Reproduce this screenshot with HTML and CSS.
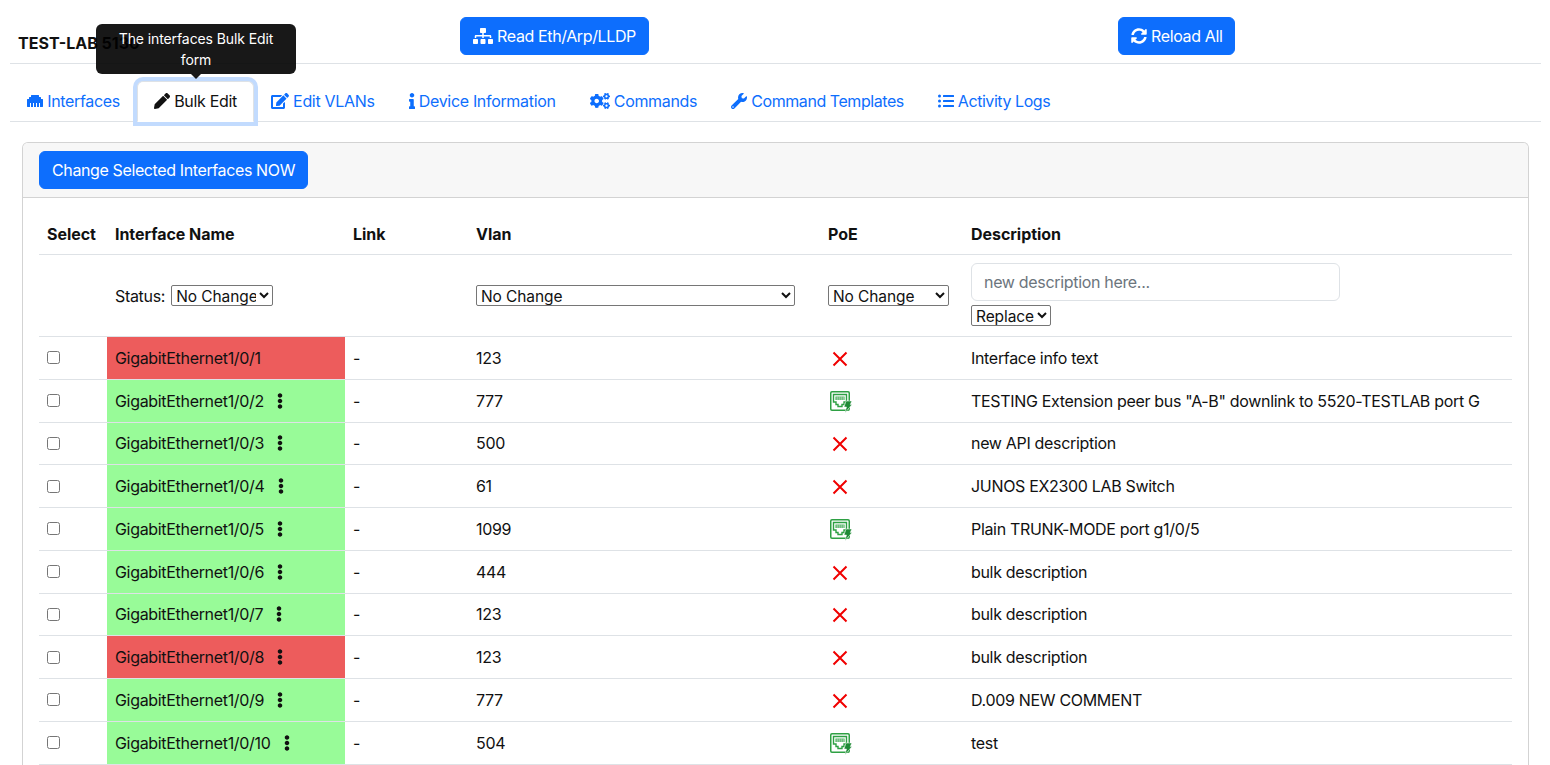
FILE: index.html
```html
<!DOCTYPE html>
<html>
<head>
    <title>TEST-LAB 5130: Bulk Edit</title>
    <meta charset="utf-8" />
    <link rel="stylesheet" href="styles.css">
</head>
<body>
<svg class="defs" aria-hidden="true">
    <symbol id="i-pencil" viewBox="0 0 512 512"><path d="M497.9 142.1l-46.1 46.1c-4.7 4.7-12.3 4.7-17 0l-111-111c-4.7-4.7-4.7-12.3 0-17l46.1-46.1c18.7-18.7 49.1-18.7 67.9 0l60.1 60.1c18.8 18.7 18.8 49.1 0 67.9zM284.2 99.8L21.6 362.4.4 483.9c-2.9 16.4 11.4 30.6 27.8 27.8l121.5-21.3 262.6-262.6c4.7-4.7 4.7-12.3 0-17l-111-111c-4.8-4.7-12.4-4.7-17.1 0z"/></symbol>
    <symbol id="i-sitemap" viewBox="0 0 640 512"><path d="M128 352H32c-17.67 0-32 14.33-32 32v96c0 17.67 14.33 32 32 32h96c17.67 0 32-14.33 32-32v-96c0-17.67-14.33-32-32-32zm-24-80h192v48h48v-48h192v48h48v-57.59c0-21.17-17.23-38.41-38.41-38.41H344v-64h40c17.67 0 32-14.33 32-32V32c0-17.67-14.33-32-32-32H256c-17.67 0-32 14.33-32 32v96c0 17.67 14.33 32 32 32h40v64H94.41C73.23 224 56 241.23 56 262.41V320h48v-48zm264 80h-96c-17.67 0-32 14.33-32 32v96c0 17.67 14.33 32 32 32h96c17.67 0 32-14.33 32-32v-96c0-17.67-14.33-32-32-32zm240 0h-96c-17.67 0-32 14.33-32 32v96c0 17.67 14.33 32 32 32h96c17.67 0 32-14.33 32-32v-96c0-17.67-14.33-32-32-32z"/></symbol>
    <symbol id="i-sync" viewBox="0 0 512 512"><path d="M370.72 133.28C339.458 104.008 298.888 87.962 255.848 88c-77.458.068-144.328 53.178-162.791 126.85-1.344 5.363-6.122 9.15-11.651 9.15H24.103c-7.498 0-13.194-6.807-11.807-14.176C33.933 94.924 134.813 8 256 8c66.448 0 126.791 26.136 171.315 68.685L463.03 40.97C478.149 25.851 504 36.559 504 57.941V192c0 13.255-10.745 24-24 24H345.941c-21.382 0-32.09-25.851-16.971-40.971l41.75-41.749zM32 296h134.059c21.382 0 32.09 25.851 16.971 40.971l-41.75 41.75c31.262 29.273 71.835 45.319 114.876 45.28 77.418-.07 144.315-53.144 162.787-126.849 1.344-5.363 6.122-9.15 11.651-9.15h57.304c7.498 0 13.194 6.807 11.807 14.176C478.067 417.076 377.187 504 256 504c-66.448 0-126.791-26.136-171.315-68.685L48.97 471.03C33.851 486.149 8 475.441 8 454.059V320c0-13.255 10.745-24 24-24z"/></symbol>
    <symbol id="i-edit" viewBox="0 0 576 512"><path d="M402.6 83.2l90.2 90.2c3.8 3.8 3.8 10 0 13.8L274.4 405.6l-92.8 10.3c-12.4 1.4-22.9-9.1-21.5-21.5l10.3-92.8L388.8 83.2c3.8-3.8 10-3.8 13.8 0zm162-22.9l-48.8-48.8c-15.2-15.2-39.9-15.2-55.2 0l-35.4 35.4c-3.8 3.8-3.8 10 0 13.8l90.2 90.2c3.8 3.8 10 3.8 13.8 0l35.4-35.4c15.2-15.3 15.2-40 0-55.2zM384 346.2V448H64V128h229.8c3.2 0 6.2-1.3 8.5-3.5l40-40c7.6-7.6 2.2-20.5-8.5-20.5H48C21.5 64 0 85.5 0 112v352c0 26.5 21.5 48 48 48h352c26.5 0 48-21.5 48-48V306.2c0-10.7-12.9-16-20.5-8.5l-40 40c-2.2 2.3-3.5 5.3-3.5 8.5z"/></symbol>
    <symbol id="i-info" viewBox="0 0 192 512"><path d="M20 424.229h20V279.771H20c-11.046 0-20-8.954-20-20V212c0-11.046 8.954-20 20-20h112c11.046 0 20 8.954 20 20v212.229h20c11.046 0 20 8.954 20 20V492c0 11.046-8.954 20-20 20H20c-11.046 0-20-8.954-20-20v-47.771c0-11.046 8.954-20 20-20zM96 0C56.235 0 24 32.235 24 72s32.235 72 72 72 72-32.235 72-72S135.764 0 96 0z"/></symbol>
    <symbol id="i-cogs" viewBox="0 0 640 512"><path d="M512.1 191l-8.2 14.3c-3 5.3-9.4 7.5-15.1 5.4-11.8-4.4-22.6-10.7-32.1-18.6-4.6-3.8-5.8-10.5-2.8-15.7l8.2-14.3c-6.9-8-12.3-17.3-15.9-27.4h-16.5c-6 0-11.2-4.3-12.2-10.3-2-12-2.1-24.6 0-37.1 1-6 6.2-10.4 12.2-10.4h16.5c3.6-10.1 9-19.4 15.9-27.4l-8.2-14.3c-3-5.2-1.9-11.9 2.8-15.7 9.5-7.9 20.4-14.2 32.1-18.6 5.7-2.1 12.1.1 15.1 5.4l8.2 14.3c10.5-1.9 21.2-1.9 31.7 0L552 6.3c3-5.3 9.4-7.5 15.1-5.4 11.8 4.4 22.6 10.7 32.1 18.6 4.6 3.8 5.8 10.5 2.8 15.7l-8.2 14.3c6.9 8 12.3 17.3 15.9 27.4h16.5c6 0 11.2 4.3 12.2 10.3 2 12 2.1 24.6 0 37.1-1 6-6.2 10.4-12.2 10.4h-16.5c-3.6 10.1-9 19.4-15.9 27.4l8.2 14.3c3 5.2 1.9 11.9-2.8 15.7-9.5 7.9-20.4 14.2-32.1 18.6-5.7 2.1-12.1-.1-15.1-5.4l-8.2-14.3c-10.4 1.9-21.2 1.9-31.7 0zm-10.5-58.8c38.5 29.6 82.4-14.3 52.8-52.8-38.5-29.7-82.4 14.3-52.8 52.8zM386.3 286.1l33.7 16.8c10.1 5.8 14.5 18.1 10.5 29.1-8.9 24.2-26.4 46.4-42.6 65.8-7.4 8.9-20.2 11.1-30.3 5.3l-29.1-16.8c-16 13.7-34.6 24.6-54.9 31.7v33.6c0 11.6-8.3 21.6-19.7 23.6-24.6 4.2-50.4 4.4-75.9 0-11.5-2-20-11.9-20-23.6V418c-20.3-7.2-38.9-18-54.9-31.7L74 403c-10 5.8-22.9 3.6-30.3-5.3-16.2-19.4-33.3-41.6-42.2-65.7-4-10.9.4-23.2 10.5-29.1l33.3-16.8c-3.9-20.9-3.9-42.4 0-63.4L12 205.8c-10.1-5.8-14.6-18.1-10.5-29 8.9-24.2 26-46.4 42.2-65.8 7.4-8.9 20.2-11.1 30.3-5.3l29.1 16.8c16-13.7 34.6-24.6 54.9-31.7V57.1c0-11.5 8.2-21.5 19.6-23.5 24.6-4.2 50.5-4.4 76-.1 11.5 2 20 11.9 20 23.6v33.6c20.3 7.2 38.9 18 54.9 31.7l29.1-16.8c10-5.8 22.9-3.6 30.3 5.3 16.2 19.4 33.2 41.6 42.1 65.8 4 10.9.1 23.2-10 29.1l-33.7 16.8c3.9 21 3.9 42.5 0 63.5zm-117.6 21.1c59.2-77-28.7-164.9-105.7-105.7-59.2 77 28.7 164.9 105.7 105.7zm243.4 182.7l-8.2 14.3c-3 5.3-9.4 7.5-15.1 5.4-11.8-4.4-22.6-10.7-32.1-18.6-4.6-3.8-5.8-10.5-2.8-15.7l8.2-14.3c-6.9-8-12.3-17.3-15.9-27.4h-16.5c-6 0-11.2-4.3-12.2-10.3-2-12-2.1-24.6 0-37.1 1-6 6.2-10.4 12.2-10.4h16.5c3.6-10.1 9-19.4 15.9-27.4l-8.2-14.3c-3-5.2-1.9-11.9 2.8-15.7 9.5-7.9 20.4-14.2 32.1-18.6 5.7-2.1 12.1.1 15.1 5.4l8.2 14.3c10.5-1.9 21.2-1.9 31.7 0l8.2-14.3c3-5.3 9.4-7.5 15.1-5.4 11.8 4.4 22.6 10.7 32.1 18.6 4.6 3.8 5.8 10.5 2.8 15.7l-8.2 14.3c6.9 8 12.3 17.3 15.9 27.4h16.5c6 0 11.2 4.3 12.2 10.3 2 12 2.1 24.6 0 37.1-1 6-6.2 10.4-12.2 10.4h-16.5c-3.6 10.1-9 19.4-15.9 27.4l8.2 14.3c3 5.2 1.9 11.9-2.8 15.7-9.5 7.9-20.4 14.2-32.1 18.6-5.7 2.1-12.1-.1-15.1-5.4l-8.2-14.3c-10.4 1.9-21.2 1.9-31.7 0zM501.6 431c38.5 29.6 82.4-14.3 52.8-52.8-38.5-29.6-82.4 14.3-52.8 52.8z"/></symbol>
    <symbol id="i-wrench" viewBox="0 0 512 512"><path d="M507.73 109.1c-2.24-9.03-13.54-12.09-20.12-5.51l-74.36 74.36-67.88-11.31-11.31-67.88 74.36-74.36c6.62-6.62 3.43-17.9-5.66-20.16-47.38-11.74-99.55.91-136.58 37.93-39.64 39.64-50.55 97.1-34.05 147.2L18.74 402.76c-24.99 24.99-24.99 65.51 0 90.5 24.99 24.99 65.51 24.99 90.5 0l213.21-213.21c50.12 16.71 107.47 5.68 147.37-34.22 37.07-37.07 49.7-89.32 37.91-136.73zM64 472c-13.25 0-24-10.75-24-24 0-13.26 10.75-24 24-24s24 10.74 24 24c0 13.25-10.75 24-24 24z"/></symbol>
    <symbol id="i-list" viewBox="0 0 512 512"><path d="M48 48a48 48 0 1 0 48 48 48 48 0 0 0-48-48zm0 160a48 48 0 1 0 48 48 48 48 0 0 0-48-48zm0 160a48 48 0 1 0 48 48 48 48 0 0 0-48-48zm448 16H176a16 16 0 0 0-16 16v32a16 16 0 0 0 16 16h320a16 16 0 0 0 16-16v-32a16 16 0 0 0-16-16zm0-320H176a16 16 0 0 0-16 16v32a16 16 0 0 0 16 16h320a16 16 0 0 0 16-16V80a16 16 0 0 0-16-16zm0 160H176a16 16 0 0 0-16 16v32a16 16 0 0 0 16 16h320a16 16 0 0 0 16-16v-32a16 16 0 0 0-16-16z"/></symbol>
    <symbol id="i-ethernet" viewBox="0 0 512 512"><path d="M496 192h-48v-48c0-8.8-7.2-16-16-16h-48V80c0-8.8-7.2-16-16-16H144c-8.8 0-16 7.2-16 16v48H80c-8.8 0-16 7.2-16 16v48H16c-8.8 0-16 7.2-16 16v224c0 8.8 7.2 16 16 16h80V320h32v128h64V320h32v128h64V320h32v128h64V320h32v128h80c8.800 0 16-7.200 16-16V208c0-8.800-7.200-16-16-16z"/></symbol>
    <symbol id="i-dots" viewBox="0 0 192 512"><path d="M96 184c39.8 0 72 32.2 72 72s-32.2 72-72 72-72-32.2-72-72 32.2-72 72-72zM24 80c0 39.8 32.2 72 72 72s72-32.2 72-72S135.8 8 96 8 24 40.2 24 80zm0 352c0 39.8 32.2 72 72 72s72-32.2 72-72-32.2-72-72-72-72 32.2-72 72z"/></symbol>
    <symbol id="i-no" viewBox="0 0 16 16"><path d="M1.500 1.500l13 13M14.500 1.500l-13 13" fill="none" stroke="#f00000" stroke-width="2"/></symbol>
    <symbol id="i-poe" viewBox="0 0 22 22">
        <rect x=".75" y=".75" width="18.500" height="18.500" rx="1.200" fill="none" stroke="#2ea043" stroke-width="1.500"/>
        <path d="M3.500 3.500h13v7.500h-2.500v2.500h-2v2h-4v-2h-2v-2.500h-2.500z" fill="none" stroke="#2ea043" stroke-width="1.400"/>
        <path d="M5.500 5.500h9v3.500h-9z" fill="#2ea043"/>
        <path d="M7.100 5.500v3.500M9.100 5.500v3.500M11.100 5.500v3.500M13.100 5.500v3.500" stroke="#fff" stroke-width=".8"/>
        <path d="M16 10h5.800l-1.500 3.500h1.700l-7 8.300 1.500-5.800h-2.500z" fill="#1f8a36" stroke="#fff" stroke-width=".5"/>
    </symbol>
</svg>

<div class="page">
    <div class="topbar">
        <h6 class="devname">TEST-LAB 5130</h6>
        <div><button class="btn"><svg class="ico wide"><use href="#i-sitemap"/></svg> Read Eth/Arp/LLDP</button></div>
        <div><button class="btn"><svg class="ico"><use href="#i-sync"/></svg> Reload All</button></div>
    </div>

    <ul class="tabs">
        <li><a href="#"><svg class="ico"><use href="#i-ethernet"/></svg> Interfaces</a></li>
        <li class="tip-holder">
            <a href="#" class="active"><svg class="ico"><use href="#i-pencil"/></svg> Bulk Edit</a>
            <div class="tooltip">The interfaces Bulk Edit form</div>
        </li>
        <li><a href="#"><svg class="ico wider"><use href="#i-edit"/></svg> Edit VLANs</a></li>
        <li><a href="#"><svg class="ico thin"><use href="#i-info"/></svg> Device Information</a></li>
        <li><a href="#"><svg class="ico wide"><use href="#i-cogs"/></svg> Commands</a></li>
        <li class="tight"><a href="#"><svg class="ico"><use href="#i-wrench"/></svg> Command Templates</a></li>
        <li class="tight"><a href="#"><svg class="ico"><use href="#i-list"/></svg> Activity Logs</a></li>
    </ul>

    <div class="card">
        <div class="card-head"><button class="btn">Change Selected Interfaces NOW</button></div>
        <div class="card-body">
            <table class="grid">
                <colgroup>
                    <col class="c-sel"><col class="c-name"><col class="c-link"><col class="c-vlan"><col class="c-poe"><col>
                </colgroup>
                <thead>
                    <tr><th>Select</th><th>Interface Name</th><th>Link</th><th>Vlan</th><th>PoE</th><th>Description</th></tr>
                </thead>
                <tbody>
                    <tr class="filters">
                        <td></td>
                        <td>Status: <select class="s-status"><option>No Change</option></select></td>
                        <td></td>
                        <td><select class="s-vlan"><option>No Change</option></select></td>
                        <td><select class="s-poe"><option>No Change</option></select></td>
                        <td>
                            <input class="desc" type="text" placeholder="new description here...">
                            <select class="s-mode"><option>Replace</option></select>
                        </td>
                    </tr>
                    <tr>
                        <td><input type="checkbox"></td>
                        <td class="down">GigabitEthernet1/0/1</td>
                        <td>-</td><td>123</td>
                        <td><svg class="no"><use href="#i-no"/></svg></td>
                        <td>Interface info text</td>
                    </tr>
                    <tr>
                        <td><input type="checkbox"></td>
                        <td class="up">GigabitEthernet1/0/2 <svg class="dots"><use href="#i-dots"/></svg></td>
                        <td>-</td><td>777</td>
                        <td><svg class="poe"><use href="#i-poe"/></svg></td>
                        <td>TESTING Extension peer bus "A-B" downlink to 5520-TESTLAB port G</td>
                    </tr>
                    <tr>
                        <td><input type="checkbox"></td>
                        <td class="up">GigabitEthernet1/0/3 <svg class="dots"><use href="#i-dots"/></svg></td>
                        <td>-</td><td>500</td>
                        <td><svg class="no"><use href="#i-no"/></svg></td>
                        <td>new API description</td>
                    </tr>
                    <tr>
                        <td><input type="checkbox"></td>
                        <td class="up">GigabitEthernet1/0/4 <svg class="dots"><use href="#i-dots"/></svg></td>
                        <td>-</td><td>61</td>
                        <td><svg class="no"><use href="#i-no"/></svg></td>
                        <td>JUNOS EX2300 LAB Switch</td>
                    </tr>
                    <tr>
                        <td><input type="checkbox"></td>
                        <td class="up">GigabitEthernet1/0/5 <svg class="dots"><use href="#i-dots"/></svg></td>
                        <td>-</td><td>1099</td>
                        <td><svg class="poe"><use href="#i-poe"/></svg></td>
                        <td>Plain TRUNK-MODE port g1/0/5</td>
                    </tr>
                    <tr>
                        <td><input type="checkbox"></td>
                        <td class="up">GigabitEthernet1/0/6 <svg class="dots"><use href="#i-dots"/></svg></td>
                        <td>-</td><td>444</td>
                        <td><svg class="no"><use href="#i-no"/></svg></td>
                        <td>bulk description</td>
                    </tr>
                    <tr>
                        <td><input type="checkbox"></td>
                        <td class="up">GigabitEthernet1/0/7 <svg class="dots"><use href="#i-dots"/></svg></td>
                        <td>-</td><td>123</td>
                        <td><svg class="no"><use href="#i-no"/></svg></td>
                        <td>bulk description</td>
                    </tr>
                    <tr>
                        <td><input type="checkbox"></td>
                        <td class="down">GigabitEthernet1/0/8 <svg class="dots"><use href="#i-dots"/></svg></td>
                        <td>-</td><td>123</td>
                        <td><svg class="no"><use href="#i-no"/></svg></td>
                        <td>bulk description</td>
                    </tr>
                    <tr>
                        <td><input type="checkbox"></td>
                        <td class="up">GigabitEthernet1/0/9 <svg class="dots"><use href="#i-dots"/></svg></td>
                        <td>-</td><td>777</td>
                        <td><svg class="no"><use href="#i-no"/></svg></td>
                        <td>D.009 NEW COMMENT</td>
                    </tr>
                    <tr>
                        <td><input type="checkbox"></td>
                        <td class="up">GigabitEthernet1/0/10 <svg class="dots"><use href="#i-dots"/></svg></td>
                        <td>-</td><td>504</td>
                        <td><svg class="poe"><use href="#i-poe"/></svg></td>
                        <td>test</td>
                    </tr>
                </tbody>
            </table>
        </div>
    </div>
</div>
</body>
</html>
```

FILE: styles.css
```css
html, body {margin: 0; background: #fff;}
body {font: 16px/24px Inter, "Liberation Sans", sans-serif; color: #111; letter-spacing: -.32px;}
.defs {display: none;}
.page {height: 100vh; overflow: hidden; padding: 0 9px 0 10px; box-sizing: border-box;}

.ico {width: 16px; height: 16px; fill: currentColor; vertical-align: -2px;}
.ico.wide {width: 20px;}
.ico.wider {width: 18px;}
.ico.thin {width: 6px;}

.btn {
    font: inherit;
    letter-spacing: -.38px;
    color: #fff;
    background: #0d6efd;
    border: 1px solid #0d6efd;
    border-radius: 6px;
    padding: 6px 12px;
    height: 38px;
}

.topbar {
    display: grid;
    grid-template-columns: 450px 658px auto;
    align-items: start;
    height: 64px;
    padding-top: 17px;
    box-sizing: border-box;
    border-bottom: 1px solid #dee2e6;
}
.topbar .btn {display: block;}
.devname {margin: 14px 0 0 8px; font-size: 16px; font-weight: 700; line-height: 24px; letter-spacing: 0;}

.tabs {
    display: flex;
    list-style: none;
    margin: 0;
    padding: 0;
    height: 58px;
    box-sizing: border-box;
    padding-top: 17px;
    border-bottom: 1px solid #dee2e6;
}
.tabs li {position: relative;}
.tabs li.tight {letter-spacing: -.44px;}
.tabs a {
    display: block;
    height: 41px;
    box-sizing: border-box;
    padding: 7px 16px 8px;
    border: 1px solid transparent;
    border-radius: 6px 6px 0 0;
    color: #0d6efd;
    text-decoration: none;
}
.tabs a.active {
    color: #111;
    background: #fff;
    border-color: #dee2e6 #dee2e6 #fff;
    box-shadow: 0 0 0 4px #c2dbfe;
}
.tooltip {
    position: absolute;
    left: -41px;
    top: -57px;
    width: 200px;
    box-sizing: border-box;
    padding: 4px 20px;
    background: #000;
    color: #fff;
    opacity: .9;
    border-radius: 6px;
    font-size: 14px;
    line-height: 21px;
    letter-spacing: -.1px;
    text-align: center;
}
.tooltip::after {
    content: "";
    position: absolute;
    left: 50%;
    bottom: -5px;
    margin-left: -6px;
    border: solid transparent;
    border-width: 6px 6px 0;
    border-top-color: #000;
}

.card {
    margin: 20px 12px 0 12px;
    border: 1px solid #d3d3d3;
    border-bottom: 0;
    border-radius: 6px 6px 0 0;
    height: 700px;
}
.card-head {
    background: #f7f7f7;
    border-bottom: 1px solid #d3d3d3;
    border-radius: 5px 5px 0 0;
    padding: 8px 16px;
    height: 55px;
    box-sizing: border-box;
}
.card-body {padding: 16px 16px 0;}

.grid {width: 1473px; border-collapse: collapse; table-layout: fixed;}
.c-sel {width: 68px;}
.c-name {width: 238px;}
.c-link {width: 123px;}
.c-vlan {width: 352px;}
.c-poe {width: 143px;}
.grid th, .grid td {
    padding: 8px;
    text-align: left;
    vertical-align: middle;
    border-bottom: 1px solid #dee2e6;
    height: 42.75px;
    box-sizing: border-box;
}
.grid th {height: 40px; font-weight: 700; letter-spacing: -.05px;}
.grid input[type=checkbox] {margin: 0; display: block; width: 13px; height: 13px;}
.filters td {height: 82px; padding-top: 8px; padding-bottom: 8px;}
.filters td:last-child {padding-bottom: 10px;}

select {
    font-family: inherit;
    font-size: 15.5px;
    letter-spacing: -.1px;
    height: 21px;
    padding: 0;
    background: #fff;
    border: 1px solid #767676;
    border-radius: 2px;
    color: #111;
    box-sizing: border-box;
}
.s-status {width: 102px; margin-left: 2px;}
.s-vlan {width: 319px;}
.s-poe {width: 121px;}
.s-mode {width: 80px; display: block; margin-top: 4px;}
.desc {
    display: block;
    width: 369px;
    height: 38px;
    box-sizing: border-box;
    padding: 6px 12px;
    font: inherit;
    letter-spacing: inherit;
    border: 1px solid #dee2e6;
    border-radius: 6px;
}
.desc::placeholder {color: #6c757d;}

.down {background: #ed5c5c;}
.up {background: #98fb98;}
.dots {width: 6px; height: 16px; margin-left: 9px; vertical-align: -2px; fill: #111;}
.no {width: 16px; height: 16px; margin-left: 4px; vertical-align: -3px;}
.poe {width: 22px; height: 22px; margin-left: 2px; vertical-align: -7px;}
```
